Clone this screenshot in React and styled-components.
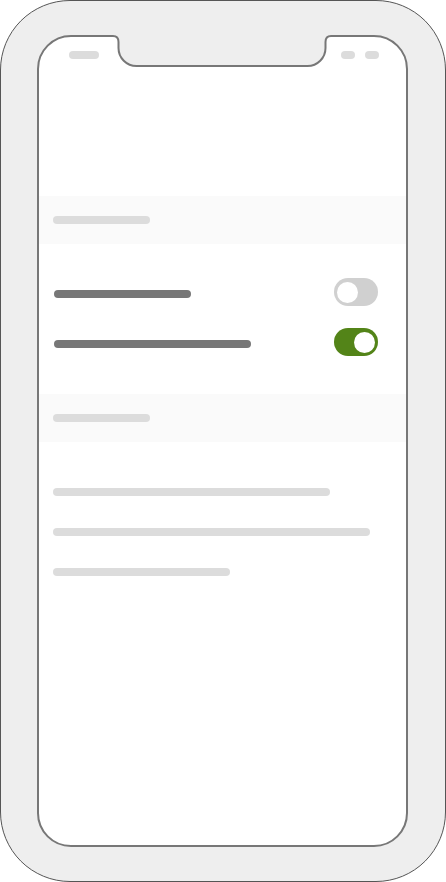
import React, { useState } from 'react'
import styled, { createGlobalStyle } from 'styled-components';

const GlobalStyle = createGlobalStyle`
    html, body {
        margin: 0;
        padding: 0;
        background: #fff;
        font-family: "Liberation Sans", Arial, sans-serif;
    }
`;

function Notch() {
    // the camera cut-out that bites into the top of the screen
    const outline = "M 0 3 L 5 3 Q 10.5 3 10.5 9 L 10.5 15 A 18 18 0 0 0 28.5 33 L 199.5 33 A 18 18 0 0 0 217.5 15 L 217.5 9 Q 217.5 3 223 3 L 228 3";
    return (
        <NotchSvg width="228" height="36" viewBox="0 0 228 36">
            <path d={outline + " L 228 0 L 0 0 Z"} fill="#eeeeee" />
            <path d={outline} fill="none" stroke="#777" strokeWidth="2" />
        </NotchSvg>
    )
}

function Toggle({ on, onClick }) {
    return (
        <Switch $on={on} onClick={onClick}>
            <Knob $on={on} />
        </Switch>
    )
}

function App() {
    const [settings, setSettings] = useState([
        { width: 137, on: false },
        { width: 197, on: true },
    ]);

    const flip = (i) => {
        setSettings(settings.map((s, j) => j === i ? { ...s, on: !s.on } : s));
    }

    return (
        <>
            <GlobalStyle />
            <Frame>
                <Screen>
                    <Notch />
                    <StatusBar>
                        <Pill $w={30} />
                        <StatusRight>
                            <Pill $w={14} />
                            <Pill $w={14} />
                        </StatusRight>
                    </StatusBar>

                    <SectionHeader>
                        <Pill $w={97} />
                    </SectionHeader>
                    <Rows>
                        {settings.map((s, i) => (
                            <Row key={i}>
                                <Label $w={s.width} />
                                <Toggle on={s.on} onClick={() => flip(i)} />
                            </Row>
                        ))}
                    </Rows>

                    <SectionHeader>
                        <Pill $w={97} />
                    </SectionHeader>
                    <Lines>
                        {[277, 317, 177].map((w, i) => <Pill key={i} $w={w} />)}
                    </Lines>
                </Screen>
            </Frame>
        </>
    )
}

const Frame = styled.div`
    box-sizing: border-box;
    width: 446px;
    height: 882px;
    border: 1px solid #555;
    border-radius: 70px;
    background-color: #eeeeee;
    padding: 34px 0 0 36px;
`;

const Screen = styled.div`
    position: relative;
    box-sizing: border-box;
    width: 371px;
    height: 812px;
    border: 2px solid #777;
    border-radius: 34px;
    background-color: #fff;
    display: flex;
    flex-direction: column;
`;

const NotchSvg = styled.svg`
    position: absolute;
    left: 69px;
    top: -4px;
    display: block;
`;

const StatusBar = styled.div`
    display: flex;
    justify-content: space-between;
    padding: 14px 27px 0 30px;
    margin-bottom: 137px;
`;

const StatusRight = styled.div`
    display: flex;
    gap: 10px;
`;

const Pill = styled.div`
    width: ${p => p.$w}px;
    height: 8px;
    border-radius: 4px;
    background-color: #dcdcdc;
`;

const SectionHeader = styled.div`
    height: 48px;
    display: flex;
    align-items: center;
    padding-left: 14px;
    background-color: #fafafa;
`;

const Rows = styled.div`
    display: flex;
    flex-direction: column;
    gap: 22px;
    padding: 34px 28px 38px 15px;
`;

const Row = styled.div`
    display: flex;
    align-items: center;
    justify-content: space-between;
    height: 28px;
`;

const Label = styled.div`
    width: ${p => p.$w}px;
    height: 8px;
    margin-top: 4px;
    border-radius: 4px;
    background-color: #777;
`;

const Switch = styled.div`
    position: relative;
    width: 44px;
    height: 28px;
    border-radius: 14px;
    background-color: ${p => p.$on ? '#538418' : '#d0d0d0'};
    cursor: pointer;
`;

const Knob = styled.div`
    position: absolute;
    top: 3.5px;
    left: ${p => p.$on ? '20px' : '3px'};
    width: 21px;
    height: 21px;
    border-radius: 50%;
    background-color: #fff;
    transition: left .2s ease-in-out;
`;

const Lines = styled.div`
    display: flex;
    flex-direction: column;
    gap: 32px;
    padding: 46px 14px 0;
`;

export default App
